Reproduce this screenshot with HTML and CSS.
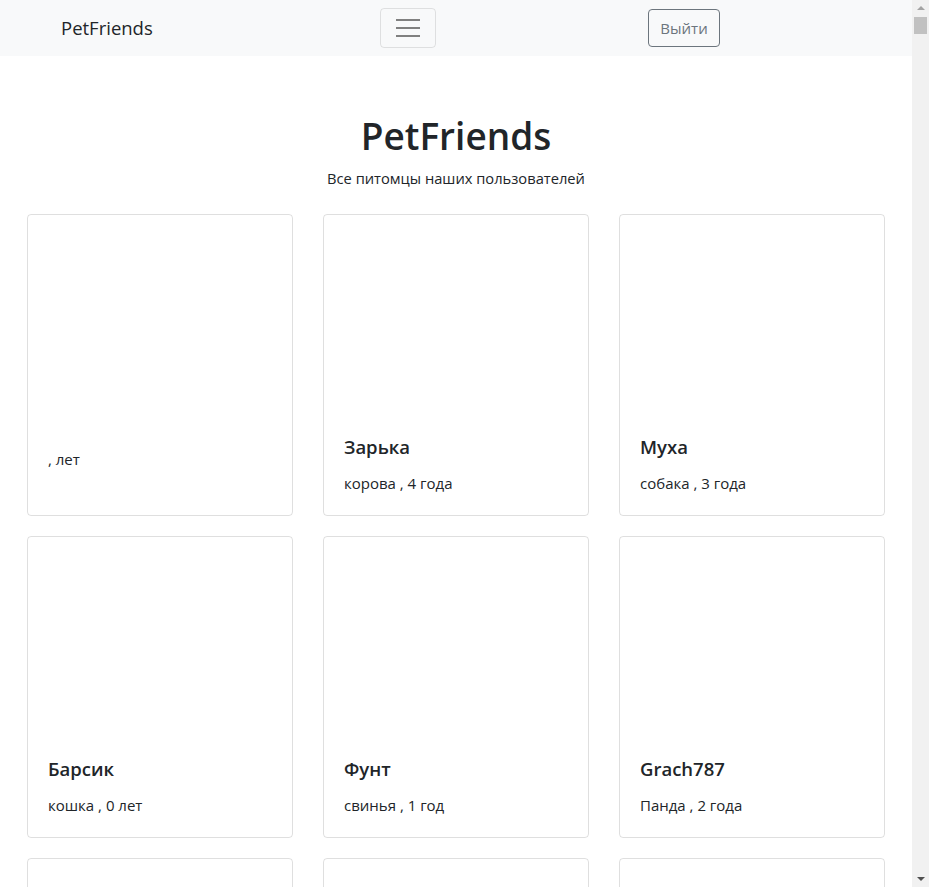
FILE: index.html
```html
<!DOCTYPE html>
<html lang="ru">
<head>
<meta charset="utf-8">
<title>PetFriends</title>
<link rel="stylesheet" href="styles.css">
</head>
<body>
<div class="page">
  <div class="main">
    <nav class="navbar">
      <a class="brand" href="#">PetFriends</a>
      <button class="toggler" type="button" aria-label="menu">
        <span class="bar"></span><span class="bar"></span><span class="bar"></span>
      </button>
      <button class="logout" type="button">Выйти</button>
    </nav>
    <header class="hero">
      <h1 class="hero-title">PetFriends</h1>
      <p class="hero-sub">Все питомцы наших пользователей</p>
    </header>
    <section class="cards">
      <div class="card"><div class="card-img"></div><div class="card-body"><h5 class="card-title"></h5><p class="card-text">, лет</p></div></div>
      <div class="card"><div class="card-img"></div><div class="card-body"><h5 class="card-title">Зарька</h5><p class="card-text">корова , 4 года</p></div></div>
      <div class="card"><div class="card-img"></div><div class="card-body"><h5 class="card-title">Муха</h5><p class="card-text">собака , 3 года</p></div></div>
      <div class="card"><div class="card-img"></div><div class="card-body"><h5 class="card-title">Барсик</h5><p class="card-text">кошка , 0 лет</p></div></div>
      <div class="card"><div class="card-img"></div><div class="card-body"><h5 class="card-title">Фунт</h5><p class="card-text">свинья , 1 год</p></div></div>
      <div class="card"><div class="card-img"></div><div class="card-body"><h5 class="card-title">Grach787</h5><p class="card-text">Панда , 2 года</p></div></div>
      <div class="card"><div class="card-img"></div><div class="card-body"><h5 class="card-title">&nbsp;</h5><p class="card-text">&nbsp;</p></div></div>
      <div class="card"><div class="card-img"></div><div class="card-body"><h5 class="card-title">&nbsp;</h5><p class="card-text">&nbsp;</p></div></div>
      <div class="card"><div class="card-img"></div><div class="card-body"><h5 class="card-title">&nbsp;</h5><p class="card-text">&nbsp;</p></div></div>
    </section>
  </div>
  <div class="scrollbar">
    <span class="arrow up"></span>
    <span class="thumb"></span>
    <span class="track"></span>
    <span class="arrow down"></span>
  </div>
</div>
</body>
</html>
```
FILE: styles.css
```css
html, body {
  margin: 0;
  padding: 0;
  height: 887px;
  overflow: hidden;
}
body {
  font-family: "Open Sans", "Noto Sans", sans-serif;
  color: #212529;
  font-size: 15px;
  line-height: 24px;
  background: #fff;
}
.page {
  display: flex;
  height: 887px;
}
.main {
  flex: 1;
  overflow: hidden;
}
.navbar {
  height: 56px;
  background: #f8f9fa;
  display: flex;
  align-items: flex-start;
  box-sizing: border-box;
}
.brand {
  margin-left: 61px;
  margin-top: 14px;
  font-size: 18.5px;
  color: #212529;
  text-decoration: none;
  width: 319px;
  line-height: 28px;
}
.toggler {
  width: 56px;
  height: 40px;
  box-sizing: border-box;
  border: 1px solid rgba(0,0,0,.1);
  border-radius: 4px;
  background: transparent;
  display: flex;
  flex-direction: column;
  align-items: center;
  justify-content: center;
  gap: 6px;
  padding: 0;
  margin-top: 8px;
}
.bar {
  display: block;
  width: 24px;
  height: 2px;
  background: #808080;
}
.logout {
  margin-left: 212px;
  margin-top: 9px;
  height: 38px;
  width: 72px;
  box-sizing: border-box;
  border: 1px solid #6c757d;
  border-radius: 4px;
  background: transparent;
  color: #6c757d;
  font-family: inherit;
  font-size: 15px;
  padding: 0;
}
.hero {
  text-align: center;
  padding-top: 56px;
}
.hero-title {
  margin: 0;
  font-size: 37px;
  font-weight: 600;
  line-height: 48px;
}
.hero-sub {
  margin: 7px 0 0;
  font-size: 14.7px;
  line-height: 22px;
}
.cards {
  display: grid;
  grid-template-columns: repeat(3, 266px);
  column-gap: 30px;
  row-gap: 20px;
  padding: 0 27px;
  margin-top: 25px;
}
.card {
  border: 1px solid rgba(0,0,0,.125);
  border-radius: 4px;
  display: flex;
  flex-direction: column;
}
.card-img {
  height: 200px;
}
.card-body {
  padding: 20px;
}
.card-title {
  margin: 0 0 12px;
  font-size: 18.5px;
  font-weight: 600;
  line-height: 24px;
}
.card-text {
  margin: 0;
  font-size: 15px;
  line-height: 24px;
}
.scrollbar {
  width: 17px;
  background: #f1f1f1;
  display: flex;
  flex-direction: column;
  align-items: center;
}
.arrow {
  width: 0;
  height: 0;
  border-left: 4px solid transparent;
  border-right: 4px solid transparent;
}
.arrow.up {
  border-bottom: 4px solid #a3a3a3;
  margin-top: 6px;
}
.thumb {
  width: 13px;
  height: 17px;
  background: #c1c1c1;
  margin-top: 7px;
}
.track {
  flex: 1;
}
.arrow.down {
  border-top: 4px solid #505050;
  margin-bottom: 6px;
}
```
